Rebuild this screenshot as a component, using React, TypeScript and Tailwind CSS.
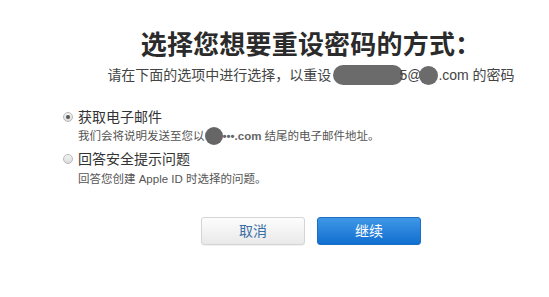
import React from "react";

const font = { fontFamily: '"Liberation Sans", "Noto Sans CJK SC", sans-serif' };

function Radio({ checked }: { checked?: boolean }) {
  return (
    <span className="flex h-[10px] w-[10px] shrink-0 items-center justify-center rounded-full border border-[#b8b8b8] bg-gradient-to-b from-[#f4f4f4] to-[#dcdcdc]">
      {checked && <span className="h-[4px] w-[4px] rounded-full bg-[#555]" />}
    </span>
  );
}

export default function App() {
  return (
    <div className="h-[297px] w-[549px] overflow-hidden bg-white text-[#333]" style={font}>
      <div className="ml-[62px] flex w-[498px] flex-col items-center pt-[29px]">
        <h1 className="text-[26px] font-bold leading-[32px] tracking-[0.2px] text-[#2b2b2b]">
          选择您想要重设密码的方式：
        </h1>
        <p className="mt-[4px] flex items-center whitespace-nowrap text-[14px] leading-[20px] text-[#444]">
          请在下面的选项中进行选择，以重设
          <span className="ml-[2px] inline-block h-[20px] w-[70px] rounded-full bg-[#6b6b6b]" />
          <span className="-ml-[4px]">5@</span>
          <span className="-ml-[2px] inline-block h-[19px] w-[19px] rounded-full bg-[#6b6b6b]" />
          <span>.com 的密码</span>
        </p>
      </div>

      <div className="ml-[63px] mt-[23px] flex flex-col">
        <div className="flex items-center gap-[5px]">
          <Radio checked />
          <span className="text-[14px] leading-[18px] text-[#333]">获取电子邮件</span>
        </div>
        <div className="ml-[15px] mt-[1px] flex items-center whitespace-nowrap text-[11.5px] leading-[16px] text-[#555]">
          我们会将说明发送至您以
          <span className="inline-block h-[18px] w-[18px] rounded-full bg-[#666]" />
          <span className="font-bold text-[#666]">•••.com</span>
          <span className="ml-[3px]">结尾的电子邮件地址。</span>
        </div>

        <div className="mt-[5px] flex items-center gap-[5px]">
          <Radio />
          <span className="text-[14px] leading-[18px] text-[#333]">回答安全提示问题</span>
        </div>
        <div className="ml-[15px] mt-[3px] whitespace-nowrap text-[11.5px] leading-[16px] text-[#555]">
          回答您创建 Apple ID 时选择的问题。
        </div>
      </div>

      <div className="ml-[201px] mt-[30px] flex gap-[12px]">
        <button className="flex h-[28px] w-[104px] items-center justify-center rounded-[3px] border border-[#d4d4d4] bg-gradient-to-b from-[#fdfdfd] to-[#e9e9e9] text-[14px] text-[#3a6ea5] shadow-[0_1px_1px_rgba(0,0,0,0.06)]">
          取消
        </button>
        <button className="flex h-[28px] w-[104px] items-center justify-center rounded-[3px] border border-[#1c6fc4] bg-gradient-to-b from-[#3e97e6] to-[#0f6fd0] text-[14px] text-white">
          继续
        </button>
      </div>
    </div>
  );
}
